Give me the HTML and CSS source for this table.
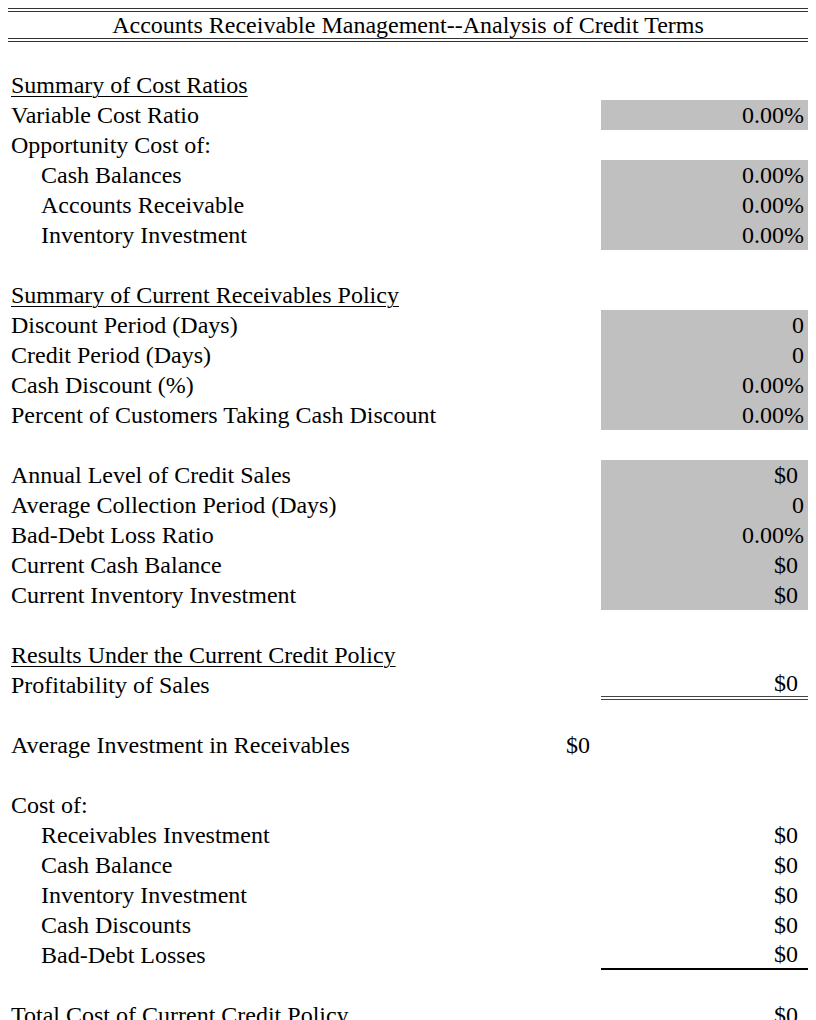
FILE: index.html
```html
<!DOCTYPE html>
<html>
<head>
    <title>Analysis of Credit Terms</title>
    <link rel="stylesheet" href="styles.css">
</head>
<body>
    <table class="sheet">
        <colgroup>
            <col class="col-label">
            <col class="col-mid">
            <col class="col-value">
        </colgroup>
        <tr class="title-row">
            <td colspan="3" class="title">Accounts Receivable Management--Analysis of Credit Terms</td>
        </tr>
        <tr class="gap-row"><td></td><td></td><td></td></tr>

        <!-- cost ratios -->
        <tr><td class="heading"><span>Summary of Cost Ratios</span></td><td></td><td></td></tr>
        <tr><td>Variable Cost Ratio</td><td></td><td class="input num">0.00%</td></tr>
        <tr><td>Opportunity Cost of:</td><td></td><td></td></tr>
        <tr><td class="indent">Cash Balances</td><td></td><td class="input num">0.00%</td></tr>
        <tr><td class="indent">Accounts Receivable</td><td></td><td class="input num">0.00%</td></tr>
        <tr><td class="indent">Inventory Investment</td><td></td><td class="input num">0.00%</td></tr>
        <tr><td></td><td></td><td></td></tr>

        <!-- current policy -->
        <tr><td class="heading"><span>Summary of Current Receivables Policy</span></td><td></td><td></td></tr>
        <tr><td>Discount Period (Days)</td><td></td><td class="input num">0</td></tr>
        <tr><td>Credit Period (Days)</td><td></td><td class="input num">0</td></tr>
        <tr><td>Cash Discount (%)</td><td></td><td class="input num">0.00%</td></tr>
        <tr><td>Percent of Customers Taking Cash Discount</td><td></td><td class="input num">0.00%</td></tr>
        <tr><td></td><td></td><td></td></tr>
        <tr><td>Annual Level of Credit Sales</td><td></td><td class="input cur">$0</td></tr>
        <tr><td>Average Collection Period (Days)</td><td></td><td class="input num">0</td></tr>
        <tr><td>Bad-Debt Loss Ratio</td><td></td><td class="input num">0.00%</td></tr>
        <tr><td>Current Cash Balance</td><td></td><td class="input cur">$0</td></tr>
        <tr><td>Current Inventory Investment</td><td></td><td class="input cur">$0</td></tr>
        <tr><td></td><td></td><td></td></tr>

        <!-- results -->
        <tr><td class="heading"><span>Results Under the Current Credit Policy</span></td><td></td><td></td></tr>
        <tr><td>Profitability of Sales</td><td></td><td class="cur total-line">$0</td></tr>
        <tr><td></td><td></td><td></td></tr>
        <tr><td>Average Investment in Receivables</td><td class="cur mid">$0</td><td></td></tr>
        <tr><td></td><td></td><td></td></tr>
        <tr><td>Cost of:</td><td></td><td></td></tr>
        <tr><td class="indent">Receivables Investment</td><td></td><td class="cur">$0</td></tr>
        <tr><td class="indent">Cash Balance</td><td></td><td class="cur">$0</td></tr>
        <tr><td class="indent">Inventory Investment</td><td></td><td class="cur">$0</td></tr>
        <tr><td class="indent">Cash Discounts</td><td></td><td class="cur">$0</td></tr>
        <tr><td class="indent">Bad-Debt Losses</td><td></td><td class="cur sum-line">$0</td></tr>
        <tr><td></td><td></td><td></td></tr>
        <tr><td>Total Cost of Current Credit Policy</td><td></td><td class="cur">$0</td></tr>
    </table>
</body>
</html>
```

FILE: styles.css
```css
body {
    margin: 8px;
    background: #fff;
    color: #000;
    font-family: 'Liberation Serif', 'Times New Roman', serif;
    font-size: 24px;
}

.sheet {
    width: 800px;
    table-layout: fixed;
    border-collapse: separate;
    border-spacing: 0;
}

.col-label {
    width: 452px;
}

.col-mid {
    width: 141px;
}

.col-value {
    width: 207px;
}

.sheet tr {
    height: 30px;
}

.sheet td {
    padding: 0 3px;
    line-height: 30px;
    white-space: nowrap;
    vertical-align: middle;
}

.title-row {
    height: 34px;
}

.sheet .title {
    text-align: center;
    line-height: 26px;
    border-top: 4px double #333;
    border-bottom: 4px double #333;
}

.sheet .gap-row {
    height: 28px;
}

.heading span {
    text-decoration: underline;
    text-decoration-thickness: 1px;
    text-underline-offset: 3px;
}

.sheet .indent {
    padding-left: 33px;
}

.input {
    background: #c0c0c0;
}

.sheet .num {
    text-align: right;
    padding-right: 4px;
}

.sheet .cur {
    text-align: right;
    padding-right: 10px;
}

.sheet .mid {
    padding-right: 11px;
}

/* borders sit inside the 30px row */
.sheet .total-line {
    line-height: 26px;
    border-bottom: 4px double #444;
}

.sheet .sum-line {
    line-height: 28px;
    border-bottom: 2px solid #000;
}
```
